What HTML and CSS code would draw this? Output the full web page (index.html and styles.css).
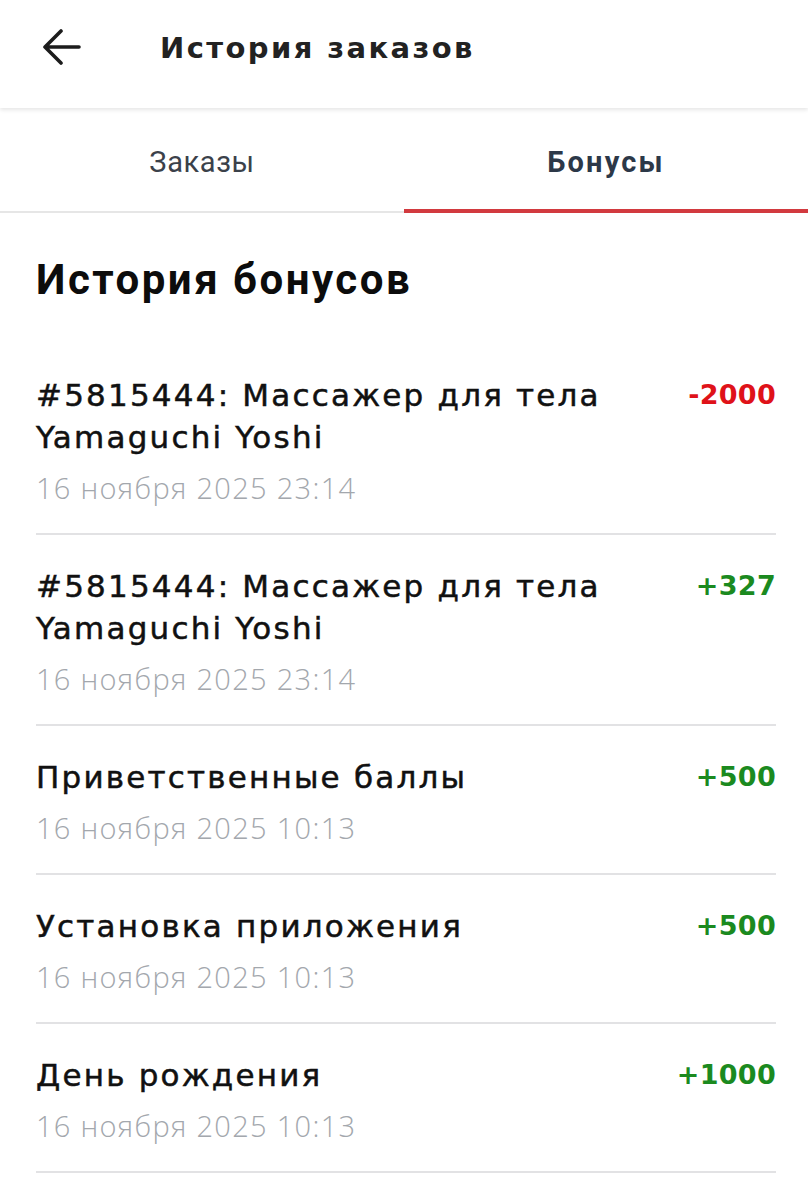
FILE: index.html
```html
<!DOCTYPE html>
<html lang="ru">
<head>
<meta charset="utf-8">
<title>История заказов</title>
<link rel="stylesheet" href="styles.css">
</head>
<body>
<header class="topbar">
  <button class="back" aria-label="Назад">
    <svg width="40" height="36" viewBox="0 0 40 36"><path d="M37 18H4M19 2L3 18L19 34" fill="none" stroke="#1c1c1c" stroke-width="3.6" stroke-linecap="round" stroke-linejoin="round"/></svg>
  </button>
  <h1 class="title">История заказов</h1>
</header>
<nav class="tabs">
  <div class="tab">Заказы</div>
  <div class="tab active">Бонусы</div>
</nav>
<main class="content">
  <h2 class="section-title">История бонусов</h2>
  <ul class="list">
    <li class="row">
      <div class="info">
        <div class="name">#5815444: Массажер для тела Yamaguchi Yoshi</div>
        <div class="date">16 ноября 2025 23:14</div>
      </div>
      <div class="amount minus">-2000</div>
    </li>
    <li class="row">
      <div class="info">
        <div class="name">#5815444: Массажер для тела Yamaguchi Yoshi</div>
        <div class="date">16 ноября 2025 23:14</div>
      </div>
      <div class="amount plus">+327</div>
    </li>
    <li class="row">
      <div class="info">
        <div class="name">Приветственные баллы</div>
        <div class="date">16 ноября 2025 10:13</div>
      </div>
      <div class="amount plus">+500</div>
    </li>
    <li class="row">
      <div class="info">
        <div class="name">Установка приложения</div>
        <div class="date">16 ноября 2025 10:13</div>
      </div>
      <div class="amount plus">+500</div>
    </li>
    <li class="row">
      <div class="info">
        <div class="name">День рождения</div>
        <div class="date">16 ноября 2025 10:13</div>
      </div>
      <div class="amount plus">+1000</div>
    </li>
  </ul>
</main>
</body>
</html>
```
FILE: styles.css
```css
* { box-sizing: border-box; }
html, body { margin: 0; padding: 0; background: #fff; }
body { font-family: "DejaVu Sans", "Open Sans", sans-serif; color: #111; }

.topbar {
  height: 108px;
  display: flex;
  align-items: center;
  padding-left: 42px;
  background: #fff;
  box-shadow: 0 2px 4px rgba(0,0,0,0.10);
  position: relative;
  z-index: 1;
}
.back {
  border: 0;
  background: none;
  padding: 0;
  width: 40px;
  height: 36px;
  display: flex;
  margin-top: -14px;
}
.title {
  margin: -12px 0 0 78px;
  font-family: "DejaVu Sans", sans-serif;
  font-size: 29px;
  font-weight: 700;
  color: #222;
  letter-spacing: 2.4px;
}

.tabs {
  margin-top: 4px;
  display: grid;
  grid-template-columns: 1fr 1fr;
  border-bottom: 2px solid #e6e6e6;
}
.tab {
  height: 99px;
  display: flex;
  align-items: center;
  justify-content: center;
  font-family: Roboto, sans-serif;
  font-size: 29px;
  color: #3b414a;
  letter-spacing: 0.6px;
}
.tab.active {
  font-weight: 700;
  color: #2c3848;
  letter-spacing: 2.2px;
  box-shadow: inset 0 -4px 0 #d23a3f;
  margin-bottom: -2px;
  height: 101px;
  padding-bottom: 2px;
}

.content { padding: 0 32px 0 36px; }
.section-title {
  margin: 0;
  padding-top: 42px;
  font-family: Roboto, sans-serif;
  font-size: 42px;
  font-weight: 700;
  line-height: 50px;
  letter-spacing: 2.5px;
  color: #0c0c0c;
}
.list { list-style: none; margin: 39px 0 0; padding: 0; }
.row {
  display: flex;
  justify-content: space-between;
  align-items: flex-start;
  padding: 30px 0 24px;
  border-bottom: 2px solid #e2e2e4;
}
.info { flex: 1; max-width: 600px; }
.name {
  font-size: 31px;
  font-weight: 400;
  line-height: 42px;
  letter-spacing: 2.2px;
  -webkit-text-stroke: 0.5px #111;
  color: #111;
}
.date {
  margin-top: 9px;
  font-family: "Open Sans", sans-serif;
  font-size: 29px;
  font-weight: 300;
  line-height: 42px;
  letter-spacing: 1.3px;
  color: #a3a7ad;
}
.amount {
  font-size: 27px;
  font-weight: 700;
  line-height: 42px;
  letter-spacing: 0.3px;
}
.minus { color: #df1219; }
.plus { color: #1b8a1f; }
```
